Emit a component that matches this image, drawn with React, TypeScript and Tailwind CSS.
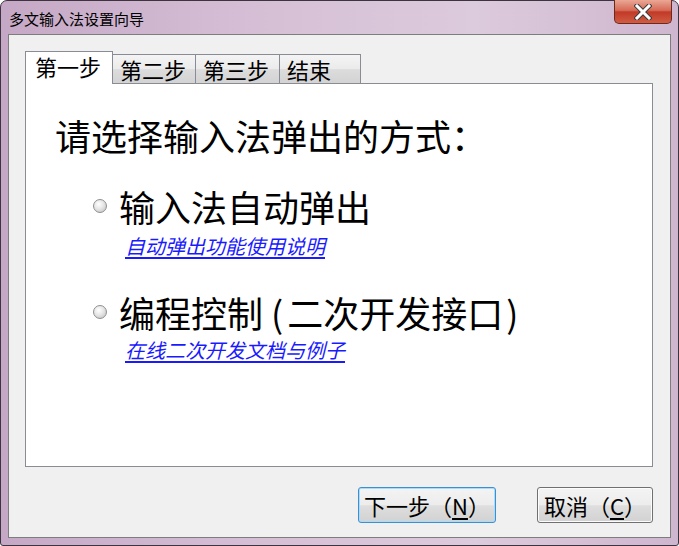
import { useState } from 'react';

const tabs = [
  { label: '第一步', width: 'w-[83px]' },
  { label: '第二步', width: 'w-[83px]' },
  { label: '第三步', width: 'w-[84px]' },
  { label: '结束', width: 'w-[81px]' },
];

const CloseGlyph = () => (
  <svg width="18" height="16" viewBox="0 0 18 16">
    <path d="M3 2 L15 14 M15 2 L3 14" stroke="#3b3b3b" strokeWidth="5" strokeLinecap="square" />
    <path d="M3 2 L15 14 M15 2 L3 14" stroke="#ffffff" strokeWidth="3" strokeLinecap="square" />
  </svg>
);

const Radio = () => (
  <span className="w-[14px] h-[14px] rounded-full border border-[#8f8f8f] bg-[radial-gradient(circle_at_40%_35%,#ffffff,#e6e6e6_45%,#bdbdbd)] shrink-0" />
);

const App = () => {
  const [active, setActive] = useState(0);

  return (
    <div className="w-[679px] h-[546px] font-['Noto_Sans_CJK_SC',sans-serif] text-black">
      {/* Window frame */}
      <div className="w-full h-full flex flex-col border border-[#3e3440] rounded-t-[7px] rounded-b-[3px] bg-[linear-gradient(90deg,#c5a8c5,#d5bed5_35%,#dccbdc_70%,#cfb6cf)] px-[7px] pb-[7px]">
        {/* Title bar */}
        <div className="h-[33px] flex justify-between items-start">
          <span className="text-[15px] leading-none mt-[10px] ml-[1px]">多文输入法设置向导</span>
          <button className="w-[58px] h-[24px] -mt-px mr-[-1px] flex items-center justify-center rounded-b-[5px] border border-t-0 border-[#6b2a20] bg-[linear-gradient(#eaa796,#d66a55_45%,#c23a27_52%,#d05c43)]">
            <CloseGlyph />
          </button>
        </div>

        {/* Client area */}
        <div className="flex-1 flex flex-col bg-[#f0f0f0] border border-[#7d7d7d] pt-[16px] pl-[16px] pr-[17px]">
          {/* Tab strip */}
          <div className="h-[33px] flex items-end relative z-10 text-[22px] leading-none">
            <div
              onClick={() => setActive(0)}
              className="w-[88px] h-[33px] bg-white border border-b-0 border-[#898c95] pl-[9px] pt-[3px]"
            >
              {tabs[0].label}
            </div>
            {tabs.slice(1).map((tab, i) => (
              <div
                key={tab.label}
                onClick={() => setActive(i + 1)}
                className={`${tab.width} h-[29px] mb-px border-t border-r border-[#898c95] pl-[7px] pt-[3px] ${
                  active === i + 1 ? 'bg-white' : 'bg-[linear-gradient(#f4f4f4,#ebebeb_50%,#dcdcdc_52%,#d3d3d3)]'
                }`}
              >
                {tab.label}
              </div>
            ))}
          </div>

          {/* Tab pane */}
          <div className="-mt-px w-[628px] h-[384px] bg-white border border-[#898c95] pl-[29px] pt-[33px]">
            <div className="text-[36px] leading-none">请选择输入法弹出的方式：</div>

            <div className="mt-[35px] ml-[38px] flex items-center gap-[12px]">
              <Radio />
              <span className="text-[36px] leading-none">输入法自动弹出</span>
            </div>
            <a href="#" className="block w-fit mt-[12px] ml-[70px] text-[20px] leading-none italic text-[#1a1aff] underline underline-offset-[3px]">
              自动弹出功能使用说明
            </a>

            <div className="mt-[38px] ml-[38px] flex items-center gap-[12px]">
              <Radio />
              <span className="text-[36px] leading-none">
                编程控制<span className="ml-[8px] mr-[4px]">(</span>二次开发接口<span className="ml-[3px]">)</span>
              </span>
            </div>
            <a href="#" className="block w-fit mt-[10px] ml-[70px] text-[20px] leading-none italic text-[#1a1aff] underline underline-offset-[3px]">
              在线二次开发文档与例子
            </a>
          </div>

          {/* Buttons */}
          <div className="mt-[20px] w-[628px] flex justify-end gap-[41px] text-[22px] leading-none">
            <button className="w-[138px] h-[36px] flex items-center justify-center rounded-[3px] border border-[#3c8fd0] shadow-[inset_0_0_0_1px_#a8dcf8] bg-[linear-gradient(#f4f4f4,#ececec_50%,#dedede_52%,#d2d2d2)]">
              下一步（<span className="underline underline-offset-[3px]">N</span>）
            </button>
            <button className="w-[116px] h-[36px] flex items-center justify-center rounded-[3px] border border-[#707070] shadow-[inset_0_0_0_1px_#fcfcfc] bg-[linear-gradient(#f4f4f4,#ececec_50%,#dedede_52%,#d2d2d2)]">
              取消（<span className="underline underline-offset-[3px]">C</span>）
            </button>
          </div>
        </div>
      </div>
    </div>
  );
};

export default App;
